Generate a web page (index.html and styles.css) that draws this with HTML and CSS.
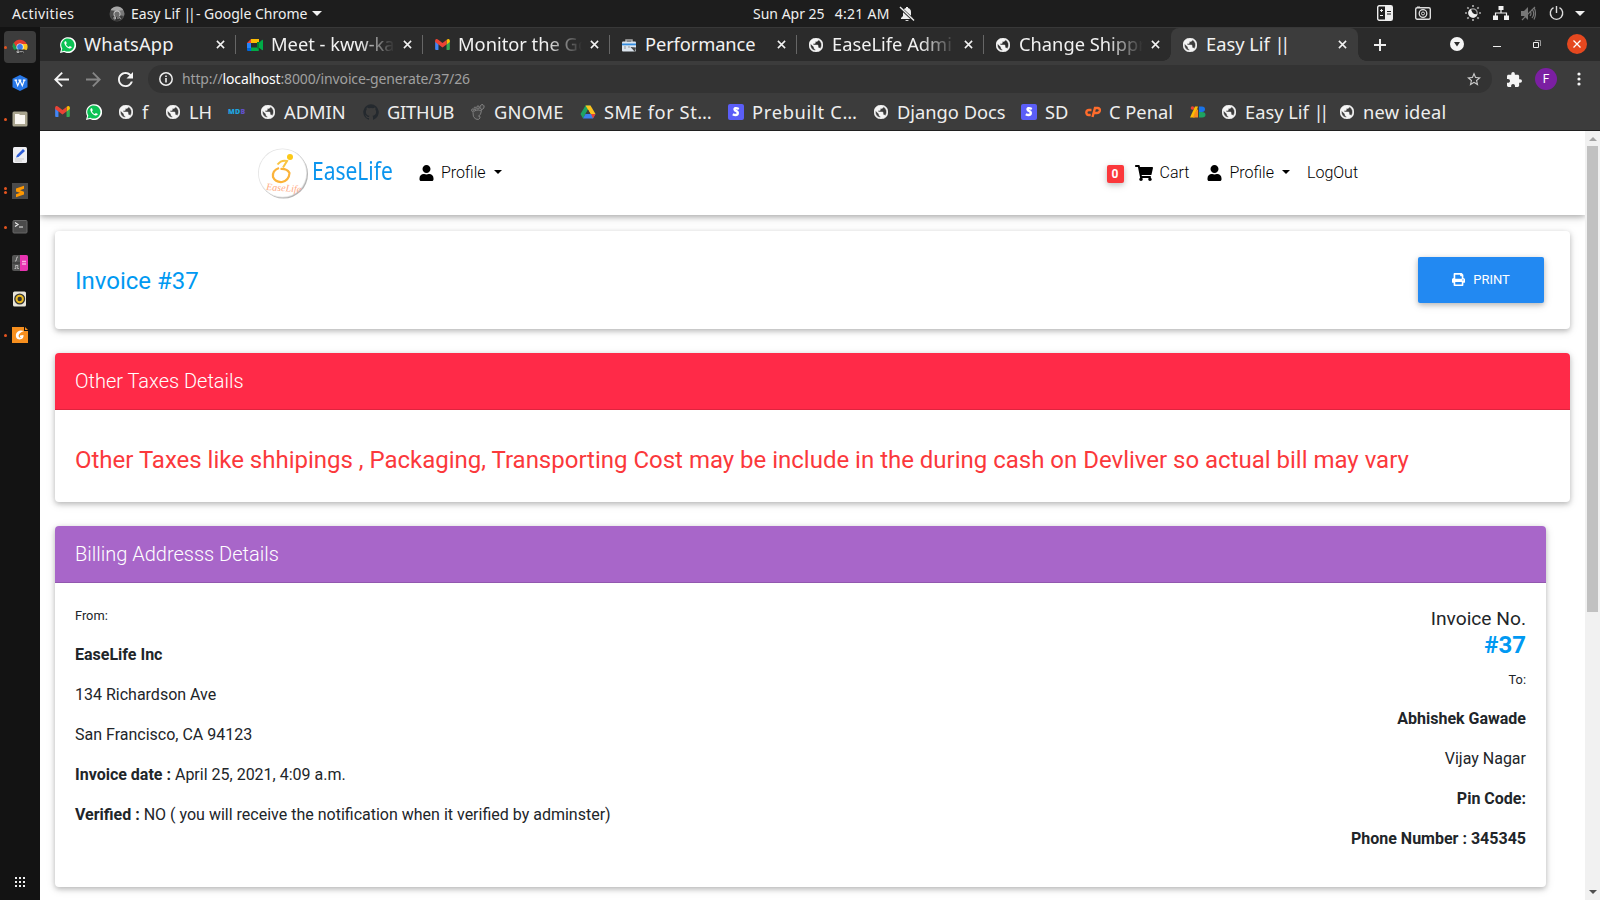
FILE: index.html
```html
<!DOCTYPE html>
<html lang="en">
<head>
<meta charset="utf-8">
<title>Easy Lif ||</title>
<link rel="stylesheet" href="styles.css">
</head>
<body>
<svg class="defs" aria-hidden="true">
  <symbol id="globe" viewBox="2 2 20 20"><path d="M12 2C6.48 2 2 6.48 2 12s4.48 10 10 10 10-4.480 10-10S17.520 2 12 2zm-1 17.930c-3.950-.490-7-3.850-7-7.930 0-.620.080-1.210.210-1.790L9 15v1c0 1.100.900 2 2 2v1.930zm6.900-2.540c-.260-.810-1-1.390-1.900-1.390h-1v-3c0-.550-.450-1-1-1H8v-2h2c.550 0 1-.450 1-1V7h2c1.100 0 2-.900 2-2v-.410c2.930 1.190 5 4.060 5 7.410 0 2.080-.800 3.970-2.100 5.390z" fill="#f5f5f5" stroke="#f5f5f5" stroke-width=".7"/></symbol>
  <symbol id="whatsapp" viewBox="0 0 16 16"><path d="M0 16l1.100-4A8 8 0 1 1 4 15z" fill="#fff"/><path d="M1.500 14.500l.8-2.900A6.600 6.600 0 1 1 4.500 13.700z" fill="#0cc254"/><path d="M5.200 4.200c-.9.500-1.100 1.500-.6 2.700.8 2 2.400 3.600 4.500 4.500 1.300.4 2.400 0 2.700-1.300l-2-1-.9 1C7.500 9.500 6.500 8.500 6 7.200l.8-.9-.8-2.100z" fill="#fff"/></symbol>
  <symbol id="gmail" viewBox="0 0 16 12"><path d="M0 2v9q0 1 1 1h2.600V5z" fill="#4285f4"/><path d="M16 2v9q0 1-1 1h-2.600V5z" fill="#34a853"/><path d="M12.400 1v5L16 3.300V1.700C16 0 14.200-.5 13 .5z" fill="#fbbc04"/><path d="M0 1.700C0 0 1.800-.5 3 .5l5 3.800 5-3.800-.6.600V6L8 9.200 3.600 6 0 3.300z" fill="#ea4335"/></symbol>
  <symbol id="close" viewBox="0 0 10 10"><path d="M1 1l8 8M9 1L1 9" stroke="#f2f2f2" stroke-width="1.700"/></symbol>
  <symbol id="stripe" viewBox="0 0 16 16"><rect width="16" height="16" rx="2" fill="#5b5ef7"/><path d="M10.800 5Q8.900 4 7.500 4.200C5.900 4.500 6.400 6.300 8 6.900c2.600 1 2.200 4-.4 4.100-1 0-1.900-.3-2.800-.8" fill="none" stroke="#fff" stroke-width="2.400"/></symbol>
  <symbol id="user" viewBox="0 0 448 512"><path d="M224 256c70.700 0 128-57.300 128-128S294.700 0 224 0 96 57.300 96 128s57.300 128 128 128zm89.600 32h-16.700c-22.200 10.200-46.900 16-72.900 16s-50.600-5.800-72.900-16h-16.700C60.200 288 0 348.200 0 422.400V464c0 26.500 21.500 48 48 48h352c26.500 0 48-21.500 48-48v-41.600c0-74.200-60.200-134.400-134.400-134.400z"/></symbol>
</svg>

<header class="topbar">
  <span class="activities">Activities</span>
  <div class="app-menu">
    <svg width="16" height="16" viewBox="0 0 16 16"><circle cx="8" cy="8" r="7.500" fill="#4b4b4b"/><path d="M1.500 4.300A7.500 7.500 0 0 1 14.600 4.500L8 5z" fill="#a7a7a7"/><path d="M8 5h6.800q1.200 3 0 5L11 9z" fill="#777"/><circle cx="8" cy="8" r="3.500" fill="#c9c9c9"/><circle cx="8" cy="8" r="2.600" fill="#6b6b6b"/><path d="M2.500 10.500h11q-5.500 9-11 0z" fill="#333"/><path d="M5 11v2h1.500v-2zM8 12h2M10.500 11l1 2" stroke="#ddd" stroke-width=".7" fill="none"/></svg>
    <span class="app-title">Easy Lif <span class="bars">||</span> - Google Chrome</span>
    <i class="arrow-down"></i>
  </div>
  <div class="clock"><span>Sun Apr 25</span><span class="time">4:21 AM</span>
    <svg width="16" height="16" viewBox="0 0 16 16" fill="#eee"><path d="M7 1h2v1q3 .8 3 4v4l2 2v1H2v-1l2-2V6q0-3.200 3-4zM6 14h4q-2 2-4 0z"/><path d="M1 1.500l14 13" stroke="#1d1d1d" stroke-width="3"/><path d="M1 1l14 13.500" stroke="#eee" stroke-width="1.400"/></svg>
  </div>
  <div class="status">
    <svg width="16" height="16" viewBox="0 0 16 16"><rect x=".7" y=".7" width="14.600" height="14.600" rx="1.500" fill="none" stroke="#eee" stroke-width="1.400"/><path d="M8 1h7v14H8z" fill="#eee"/><path d="M3 5.500h3M4.500 4v3M3 10.500h3" stroke="#eee"/><path d="M10 6.500h4M10 9h4" stroke="#1d1d1d" stroke-width="1.200"/></svg>
    <svg width="16" height="14" viewBox="0 0 16 14" fill="none" stroke="#ddd"><rect x=".7" y="1.700" width="14.600" height="11.500" rx="1.500" stroke-width="1.400"/><path d="M2 1h3"/><circle cx="8" cy="7.500" r="3.800" stroke-width="1.300"/><circle cx="8" cy="7.500" r="1.500"/></svg>
    <svg width="16" height="16" viewBox="0 0 16 16"><path d="M8 0v2M8 14v2M0 8h2M14 8h2M2.300 2.300l1.400 1.400M12.300 12.300l1.400 1.400M2.300 13.700l1.400-1.400M12.300 3.700l1.400-1.400" stroke="#aaa" stroke-width="1.700"/><circle cx="8" cy="8" r="4.200" fill="none" stroke="#999" stroke-width="1.200"/><path d="M6 3.700a4.700 4.700 0 1 0 6.500 5.500Q7 10 6 3.700z" fill="#eee"/></svg>
    <svg width="16" height="14" viewBox="0 0 16 14"><path d="M5.500 0h5v4h-5zM0 9.500h5V14H0zM11 9.500h5V14h-5z" fill="#f2f2f2"/><path d="M8 3v4M2.500 10V7h11v3" stroke="#f2f2f2" stroke-width="1.200" fill="none"/></svg>
    <svg width="15" height="15" viewBox="0 0 15 15"><path d="M0 5h3l4-4v13l-4-4H0z" fill="#777"/><path d="M9 5q2 2.500 0 5M11 3q3.500 4.500 0 9M13 1.500v0q3 6 0 12M1 14L14 1" stroke="#777" fill="none" stroke-width="1.200"/></svg>
    <svg width="15" height="15" viewBox="0 0 15 15" fill="none" stroke="#ddd" stroke-width="1.400"><path d="M7.500 0v7M4.500 1.700a6.200 6.200 0 1 0 6 0"/></svg>
    <i class="arrow-down"></i>
  </div>
</header>

<div class="desktop">
  <nav class="dock">
    <div class="dock-item current"><i class="dots one"></i><svg width="16" height="16" viewBox="0 0 16 16"><path d="M.5 8A7.500 7.500 0 0 1 15 5.500H8z" fill="#e33b2e"/><path d="M.5 7q0-2 1.200-3.500L5 9.500 6 12q-5 0-5.500-5z" fill="#1d9a50"/><path d="M8 5h7q1.300 3-.3 6H10z" fill="#fcc31e"/><circle cx="8" cy="8" r="3.600" fill="#fff"/><circle cx="8" cy="8" r="2.900" fill="#3b7de9"/><path d="M2.500 10.500h11q-5.500 10-11 0z" fill="#333"/><path d="M5 12h2v1.500H5zM8 12.700h2M10.500 12l1 1.500" stroke="#ddd" stroke-width=".7" fill="none"/></svg></div>
    <div class="dock-item"><svg width="16" height="16" viewBox="0 0 16 16"><path d="M8 0l7.500 3.700v8.600L8 16 .5 12.300V3.700z" fill="#2878e8"/><path d="M2.500 5.200H5M11 5.200h2.500M3.700 5.200l2 5.500L8 5.500l2.300 5.200 2-5.500M6.300 5.200h3" fill="none" stroke="#fff" stroke-width="1.200"/></svg></div>
    <div class="dock-item"><i class="dots one"></i><svg width="16" height="16" viewBox="0 0 16 16"><rect x=".5" y=".5" width="15" height="15" rx="1.500" fill="#aaa58f"/><path d="M3 3h4l1 1h5v9H3z" fill="#faf7f2"/></svg></div>
    <div class="dock-item"><svg width="16" height="16" viewBox="0 0 16 16"><rect x="1" width="14" height="16" rx="1.500" fill="#eeeef2"/><path d="M3 12h9M3 14h7" stroke="#ccc"/><path d="M4 10.500l1-2.500 6-6 2 2-6.500 6z" fill="#2e5ed8"/></svg></div>
    <div class="dock-item"><i class="dots two"></i><svg width="16" height="16" viewBox="0 0 16 16"><rect width="16" height="16" fill="#4b4b4b"/><path d="M4 5.500l8-2.700v3L8 7.200l4 1.500v2.800l-8 2.700v-3l4-1.400-4-1.400z" fill="#ff9800"/></svg></div>
    <div class="dock-item"><i class="dots one"></i><svg width="16" height="14" viewBox="0 0 16 14"><rect x="1" y=".5" width="14" height="12.500" rx="1" fill="#4b4b4b" stroke="#666"/><path d="M3 2.500l3 2-3 2M7 7h4" fill="none" stroke="#eee" stroke-width="1.200"/></svg></div>
    <div class="dock-item"><svg width="16" height="16" viewBox="0 0 16 16"><rect width="16" height="16" rx="2" fill="#555"/><path d="M8 0h6q2 0 2 2v12q0 2-2 2H8z" fill="#e733b0"/><path d="M.5 8H8" stroke="#333"/><path d="M10 6.500h4M10 9h4" stroke="#f8b0df" stroke-width="1.300"/><path d="M3 6h1l1-4h1M2.500 13.500H4l-.5-3h2.500l-.5 3H7" stroke="#ccc" stroke-width=".8" fill="none"/></svg></div>
    <div class="dock-item"><svg width="16" height="16" viewBox="0 0 16 16"><rect x="1" y=".5" width="13" height="15" rx="1.500" fill="#e8e5da"/><circle cx="7.700" cy="8" r="5.500" fill="#333"/><circle cx="7.700" cy="8" r="3.200" fill="none" stroke="#e8b923" stroke-width="2"/></svg></div>
    <div class="dock-item"><i class="dots one"></i><svg width="16" height="16" viewBox="0 0 16 16"><path d="M0 0h12v4h4v12H0z" fill="#f78f1e"/><path d="M13 0l3 3h-3z" fill="#f78f1e"/><path d="M12 4Q6 2 4 7q-1 5 3.500 5.500Q12 12 11.500 8L8 8.500v1.500h1.500Q8 11 6.800 10 5.500 6.500 12 4z" fill="#fff"/></svg></div>
    <svg class="apps" width="10" height="10" viewBox="0 0 10 10" fill="#eee"><path d="M0 0h2v2H0zM4 0h2v2H4zM8 0h2v2H8zM0 4h2v2H0zM4 4h2v2H4zM8 4h2v2H8zM0 8h2v2H0zM4 8h2v2H4zM8 8h2v2H8z"/></svg>
  </nav>

  <section class="browser">
    <div class="tabstrip">
      <div class="tab"><svg class="fav"><use href="#whatsapp"/></svg><span class="tab-label wa">WhatsApp</span><svg class="x"><use href="#close"/></svg></div>
      <div class="tab"><svg class="fav" viewBox="0 0 16 16"><path d="M0 6l4-4v4z" fill="#ea4335"/><path d="M4 2h8v4H4z" fill="#fbbc04"/><path d="M0 6h4v5H0z" fill="#2684fc"/><path d="M0 11h4v3H1q-1 0-1-1z" fill="#0066da"/><path d="M4 10.500h8V13q0 1-1 1H4z" fill="#00ac47"/><path d="M11 6.500l4-3.500q1-.5 1 .5v9q0 1-1 .5l-4-3z" fill="#00ac47"/><path d="M10 5h2v8l-2-2z" fill="#00832d"/></svg><span class="tab-label fade">Meet - kww-ka</span><svg class="x"><use href="#close"/></svg></div>
      <div class="tab"><svg class="fav gm"><use href="#gmail"/></svg><span class="tab-label fade">Monitor the Go</span><svg class="x"><use href="#close"/></svg></div>
      <div class="tab"><svg class="fav" viewBox="0 0 16 16"><path d="M5 5V3h6v2" fill="none" stroke="#aaa" stroke-width="1.500"/><rect x="1" y="4.500" width="14" height="10" rx="1" fill="#dce5ee"/><path d="M1 6.500h14v1.800H1z" fill="#348cdf"/><path d="M4 9v3M8 9v2" stroke="#999"/><path d="M9.500 10l4.500 5 1-4.500z" fill="#444"/></svg><span class="tab-label perf">Performance</span><svg class="x"><use href="#close"/></svg></div>
      <div class="tab"><svg class="fav gl"><use href="#globe"/></svg><span class="tab-label fade">EaseLife Admi</span><svg class="x"><use href="#close"/></svg></div>
      <div class="tab last"><svg class="fav gl"><use href="#globe"/></svg><span class="tab-label fade">Change Shippr</span><svg class="x"><use href="#close"/></svg></div>
      <div class="tab active"><svg class="fav gl"><use href="#globe"/></svg><span class="tab-label">Easy Lif <span class="bars">||</span></span><svg class="x"><use href="#close"/></svg></div>
      <svg class="newtab" width="12" height="12" viewBox="0 0 12 12"><path d="M6 0v12M0 6h12" stroke="#eee" stroke-width="2"/></svg>
      <div class="controls">
        <svg width="14" height="14" viewBox="0 0 14 14"><circle cx="7" cy="7" r="7" fill="#f5f5f5"/><path d="M4 5h6L7 9.500z" fill="#2b2b2b"/></svg>
        <svg width="8" height="6" viewBox="0 0 8 6"><path d="M0 5.500h8" stroke="#eee"/></svg>
        <svg width="8" height="8" viewBox="0 0 8 8" fill="none"><path d="M.5 2.500h5v5h-5z" stroke="#eee"/><path d="M2 .5h5.500V6" stroke="#999"/></svg>
        <svg width="20" height="20" viewBox="0 0 20 20"><circle cx="10" cy="10" r="10" fill="#e5481f"/><path d="M6.500 6.500l7 7M13.500 6.500l-7 7" stroke="#fff" stroke-width="1.300"/></svg>
      </div>
    </div>

    <div class="toolbar">
      <svg class="nav-ic" viewBox="4 4 16 16"><path d="M20 11H7.830l5.590-5.590L12 4l-8 8 8 8 1.410-1.410L7.830 13H20v-2z" fill="#f5f5f5"/></svg>
      <svg class="nav-ic" viewBox="4 4 16 16"><path d="M12 4l-1.410 1.410L16.170 11H4v2h12.170l-5.580 5.590L12 20l8-8z" fill="#868686"/></svg>
      <svg class="nav-ic" viewBox="4 4 16 16"><path d="M17.650 6.350C16.200 4.900 14.210 4 12 4c-4.420 0-7.990 3.580-7.990 8s3.570 8 7.990 8c3.730 0 6.840-2.550 7.730-6h-2.080c-.82 2.330-3.040 4-5.650 4-3.310 0-6-2.690-6-6s2.690-6 6-6c1.660 0 3.140.69 4.220 1.780L13 11h7V4l-2.350 2.350z" fill="#f5f5f5"/></svg>
      <div class="omnibox">
        <svg width="14" height="14" viewBox="0 0 14 14"><circle cx="7" cy="7" r="6.200" fill="none" stroke="#eee" stroke-width="1.500"/><path d="M6.200 6h1.600v4.500H6.200zM6.200 3.500h1.600V5H6.200z" fill="#eee"/></svg>
        <span class="url">http://<b>localhost</b>:8000/invoice-generate/37/26</span>
        <svg class="star" width="14" height="14" viewBox="2 2 20 19"><path d="M22 9.240l-7.190-.62L12 2 9.190 8.630 2 9.240l5.460 4.730L5.820 21 12 17.270 18.180 21l-1.630-7.030L22 9.240zM12 15.400l-3.760 2.270 1-4.280-3.320-2.880 4.380-.38L12 6.100l1.710 4.040 4.380.38-3.320 2.880 1 4.280L12 15.400z" fill="#ccc"/></svg>
      </div>
      <svg class="puzzle" width="15" height="15" viewBox="2 1 21 21"><path d="M20.500 11H19V7c0-1.100-.9-2-2-2h-4V3.500a2.500 2.500 0 0 0-5 0V5H4c-1.100 0-1.990.9-1.990 2v3.800H3.500c1.490 0 2.700 1.210 2.700 2.700s-1.210 2.700-2.700 2.700H2V20c0 1.100.9 2 2 2h3.800v-1.500c0-1.490 1.210-2.700 2.700-2.700s2.700 1.210 2.700 2.700V22H17c1.100 0 2-.9 2-2v-4h1.500a2.500 2.500 0 0 0 0-5z" fill="#f5f5f5"/></svg>
      <span class="avatar">F</span>
      <svg class="more" width="4" height="14" viewBox="0 0 4 14" fill="#f5f5f5"><circle cx="2" cy="2" r="1.600"/><circle cx="2" cy="7" r="1.600"/><circle cx="2" cy="12" r="1.600"/></svg>
    </div>

    <div class="bookmarks">
      <span><svg class="fav gm"><use href="#gmail"/></svg></span>
      <span><svg class="fav"><use href="#whatsapp"/></svg></span>
      <span><svg class="fav gl"><use href="#globe"/></svg>f</span>
      <span><svg class="fav gl"><use href="#globe"/></svg>LH</span>
      <span class="mdb">MD<em>B</em></span>
      <span class="t-admin"><svg class="fav gl"><use href="#globe"/></svg>ADMIN</span>
      <span class="t-github"><svg class="fav" viewBox="0 0 16 16"><path d="M8 .2a8 8 0 0 0-2.500 15.500c.4 0 .5-.2.500-.4V14c-2.200.5-2.700-1-2.700-1-.4-.9-.9-1.200-.9-1.200-.7-.5.100-.5.100-.5.800.1 1.200.8 1.200.8.700 1.200 1.900.9 2.300.7.100-.5.300-.9.500-1.100-1.800-.2-3.600-.9-3.600-4 0-.9.300-1.600.8-2.100-.1-.3-.4-1 .1-2.200 0 0 .7-.2 2.200.8a7.500 7.500 0 0 1 4 0c1.500-1 2.200-.8 2.200-.8.500 1.200.2 1.900.1 2.200.5.500.8 1.200.8 2.100 0 3.100-1.900 3.800-3.700 4 .3.300.6.800.6 1.500v2.200c0 .2.100.4.500.3A8 8 0 0 0 8 .2z" fill="#24292e"/></svg>GITHUB</span>
      <span class="t-gnome"><svg class="fav" viewBox="0 0 16 16" fill="#444" stroke="#8d8d8d" stroke-width=".8"><path d="M11.500 6.500Q5 5 3 8.500 2.500 13 5.500 15q3.500 1.500 4.500-1 .5-2-1.500-2 2.500-.5 3-5.500z"/><ellipse cx="12" cy="3" rx="2" ry="2.500" transform="rotate(25 12 3)"/><ellipse cx="8" cy="3.500" rx="1.200" ry="1.700"/><ellipse cx="5" cy="4.500" rx="1" ry="1.500"/><ellipse cx="2.500" cy="6.200" rx=".9" ry="1.300"/></svg>GNOME</span>
      <span class="t-sme"><svg class="fav" viewBox="0 0 16 16"><path d="M5.500 1.500h5L5.500 10 3 14.500.5 10z" fill="#1ea362"/><path d="M5.500 1.500h5l5 8.500h-5z" fill="#fcc31e"/><path d="M5.500 10h10L13 14.500H3z" fill="#3b80ee"/><path d="M11 10h4.500L13 14.500z" fill="#ea4335"/><path d="M8 5.500l2.500 4.500h-5z" fill="#3c3c3c"/></svg>SME for St…</span>
      <span class="t-pre"><svg class="fav"><use href="#stripe"/></svg>Prebuilt C…</span>
      <span class="t-django"><svg class="fav gl"><use href="#globe"/></svg>Django Docs</span>
      <span><svg class="fav"><use href="#stripe"/></svg>SD</span>
      <span class="t-penal"><svg class="fav" viewBox="0 0 16 16" fill="none" stroke="#ff6c2c" stroke-width="2.400"><path d="M6.500 6H4Q1.500 6 1.300 8.500 1.500 11 3.500 11h2.200M7.500 13l2.500-9H12.800q2.500.5 2 2.800-.7 2.200-3 2.200H9.500"/></svg>C Penal</span>
      <span><svg class="fav" viewBox="0 0 16 16"><circle cx="2.500" cy="4" r="1.800" fill="#ea4335"/><path d="M5 2.500h3L4.500 13.500H0z" fill="#fbbc04"/><path d="M5 8l3-3v8.500H3z" fill="#f68b1e"/><path d="M9 2.500h3q3 0 3 2.700T12 8H9z" fill="#1a73e8"/><path d="M9 8h3q3.500 0 3.500 2.800T12 13.500H9z" fill="#1ea362"/></svg></span>
      <span class="t-easy"><svg class="fav gl"><use href="#globe"/></svg><span>Easy Lif <span class="bars">||</span></span></span>
      <span class="t-new"><svg class="fav gl"><use href="#globe"/></svg>new ideal</span>
    </div>

    <div class="viewport">
      <div class="page">
        <nav class="navbar">
          <a class="brand">
            <svg width="51" height="52" viewBox="0 0 51 52"><circle cx="25.500" cy="26" r="24.500" fill="#b5b5b5"/><circle cx="24.500" cy="25" r="24.500" fill="#e4e4e4"/><circle cx="24.500" cy="25" r="23.700" fill="#fff"/><circle cx="32" cy="9" r="3" fill="#fcc917"/><path d="M19.500 16.500q4-5 9.500-3.500l-4 6.500" fill="none" stroke="#f9c440" stroke-width="2"/><path d="M21 20Q14 22.500 15 29q2.500 5.500 9 5 7-1.500 7.500-9-2.500-4.500-9-4" fill="none" stroke="#fbb33a" stroke-width="2.200"/><text x="8" y="42" class="logo-text" transform="rotate(4 8 42)">EaseLife</text></svg>
            <span class="brand-name">EaseLife</span>
          </a>
          <a class="nav-link first"><svg class="user"><use href="#user"/></svg>Profile<i class="caret"></i></a>
          <div class="nav-right">
            <span class="badge">0</span>
            <a class="nav-link"><svg class="cart" viewBox="0 0 576 512"><path d="M528.120 301.319l47.273-208C578.806 78.301 567.391 64 551.990 64H159.208l-9.166-44.810C147.758 8.021 137.930 0 126.529 0H24C10.745 0 0 10.745 0 24v16c0 13.255 10.745 24 24 24h69.883l70.248 343.435C147.325 417.100 136 435.222 136 456c0 30.928 25.072 56 56 56s56-25.072 56-56c0-15.674-6.447-29.835-16.824-40h209.647C430.447 426.165 424 440.326 424 456c0 30.928 25.072 56 56 56s56-25.072 56-56c0-22.172-12.888-41.332-31.579-50.405l5.517-24.276c3.413-15.018-8.002-29.319-23.403-29.319H218.117l-6.545-32h293.145c11.206 0 20.920-7.754 23.403-18.681z"/></svg>Cart</a>
            <a class="nav-link second"><svg class="user"><use href="#user"/></svg>Profile<i class="caret"></i></a>
            <a class="nav-link logout">LogOut</a>
          </div>
        </nav>

        <main class="content">
          <section class="card title-card">
            <h4 class="invoice-title">Invoice #37</h4>
            <button class="print"><svg width="13" height="13" viewBox="0 0 512 512" fill="#fff"><path d="M448 192V77.250c0-8.490-3.370-16.620-9.370-22.630L393.370 9.370c-6-6-14.140-9.370-22.630-9.370H96C78.330 0 64 14.330 64 32v160c-35.350 0-64 28.650-64 64v112c0 8.840 7.160 16 16 16h48v96c0 17.670 14.330 32 32 32h320c17.670 0 32-14.330 32-32v-96h48c8.840 0 16-7.160 16-16V256c0-35.350-28.650-64-64-64zm-64 256H128v-96h256v96zm0-224H128V64h192v48c0 8.840 7.160 16 16 16h48v96zm48 72c-13.250 0-24-10.750-24-24 0-13.260 10.750-24 24-24s24 10.740 24 24c0 13.250-10.750 24-24 24z"/></svg>PRINT</button>
          </section>

          <section class="card">
            <div class="card-header red">Other Taxes Details</div>
            <div class="card-body taxes">Other Taxes like shhipings , Packaging, Transporting Cost may be include in the during cash on Devliver so actual bill may vary</div>
          </section>

          <section class="card billing">
            <div class="card-header purple">Billing Addresss Details</div>
            <div class="card-body columns">
              <div>
                <p><small>From:</small></p>
                <p><strong>EaseLife Inc</strong></p>
                <p>134 Richardson Ave</p>
                <p>San Francisco, CA 94123</p>
                <p><strong>Invoice date :</strong> April 25, 2021, 4:09 a.m.</p>
                <p><strong>Verified :</strong> NO ( you will receive the notification when it verified by adminster)</p>
              </div>
              <div class="to">
                <h4 class="invoice-no"><span>Invoice No.</span><strong>#37</strong></h4>
                <p><small>To:</small></p>
                <p><strong>Abhishek Gawade</strong></p>
                <p>Vijay Nagar</p>
                <p><strong>Pin Code:</strong></p>
                <p><strong>Phone Number : 345345</strong></p>
              </div>
            </div>
          </section>
        </main>
      </div>
      <div class="scrollbar"><i class="sb-up"></i><div class="thumb"></div><i class="sb-down"></i></div>
    </div>
  </section>
</div>
</body>
</html>
```
FILE: styles.css
```css
* { box-sizing: border-box; }
body {
  margin: 0;
  width: 1600px;
  height: 900px;
  overflow: hidden;
  display: flex;
  flex-direction: column;
  font-family: "Noto Sans", sans-serif;
  background: #fff;
}
svg { display: block; flex: none; }
.defs { position: absolute; width: 0; height: 0; }
.bars { letter-spacing: -.24em; }

/* system bar */
.topbar {
  height: 27px;
  flex: none;
  background: #1d1d1d;
  color: #f0f0f0;
  font-size: 14px;
  line-height: 27px;
  display: grid;
  grid-template-columns: 97px 644px 624px 1fr;
  padding-left: 12px;
  white-space: pre;
}
.activities { letter-spacing: .4px; }
.app-menu, .clock { display: flex; align-items: center; height: 27px; }
.app-title { margin-left: 6px; letter-spacing: 0; width: 181px; }
.arrow-down {
  border: 5px solid transparent;
  border-top-color: #f0f0f0;
  border-bottom: 0;
  align-self: center;
}
.clock { letter-spacing: 0; }
.time { margin-left: 10px; letter-spacing: .3px; }
.clock svg { margin-left: 9px; }
.status {
  height: 26px;
  display: grid;
  grid-template-columns: 38px 50px 28px 28px 28px 26px 10px;
  align-items: center;
}

.desktop { flex: 1; display: flex; min-height: 0; }

/* dock */
.dock {
  width: 40px;
  flex: none;
  background: #131313;
  padding-top: 4px;
  display: flex;
  flex-direction: column;
  align-items: center;
  gap: 4px;
}
.dock-item {
  width: 32px;
  height: 32px;
  border-radius: 4px;
  display: grid;
  place-items: center;
  position: relative;
}
.dock-item.current { background: #3c3c3c; }
.dots {
  position: absolute;
  left: 0;
  top: 14.500px;
  width: 3px;
  height: 3px;
  border-radius: 50%;
  background: #e5541f;
}
.dots.two { top: 12px; box-shadow: 0 4px #e5541f; }
.apps { margin-top: auto; margin-bottom: 13px; }

/* browser chrome */
.browser { flex: 1; display: flex; flex-direction: column; min-width: 0; }
.tabstrip {
  height: 34px;
  background: #2b2b2b;
  border-top: 1px solid #383838;
  display: flex;
  align-items: center;
  padding-left: 8.500px;
  color: #f2f2f2;
  font-size: 18.300px;
}
.tab {
  width: 187px;
  height: 33px;
  display: flex;
  align-items: center;
  padding-left: 11.500px;
  position: relative;
}
.tab:not(.last):not(.active)::after {
  content: "";
  position: absolute;
  right: 0;
  top: 7px;
  width: 1px;
  height: 19px;
  background: #666;
}
.tab.active { background: #3c3c3c; border-radius: 8px 8px 0 0; }
.tab.active::before, .tab.active::after {
  content: "";
  position: absolute;
  bottom: 0;
  width: 8px;
  height: 8px;
}
.tab.active::before { left: -8px; background: radial-gradient(circle at 0 0, transparent 7.500px, #3c3c3c 8px); }
.tab.active::after { right: -8px; background: radial-gradient(circle at 100% 0, transparent 7.500px, #3c3c3c 8px); }
.fav { width: 16px; height: 16px; }
.fav.gl { width: 14px; height: 14px; margin: 0 1px; }
.fav.gm { width: 15px; height: 11px; margin: 0 .5px; }
.tab-label {
  margin: -2px 0 0 8px;
  width: 124px;
  white-space: nowrap;
  line-height: 30px;
}
.wa { letter-spacing: .2px; }
.perf { letter-spacing: -.1px; }
.fade { mask-image: linear-gradient(90deg, #000 88px, transparent 124px); }
.x { width: 9px; height: 9px; margin-left: 7.500px; margin-top: -1px; }
.newtab { margin-left: 16.500px; }
.controls {
  margin-left: auto;
  margin-right: 3px;
  margin-top: -1px;
  display: grid;
  grid-template-columns: repeat(4, 40px);
  place-items: center;
}
.toolbar {
  height: 32px;
  background: #3c3c3c;
  padding: 4px 0 0 14px;
  display: flex;
  align-items: center;
}
.nav-ic { width: 15px; height: 15px; margin-right: 17px; }
.omnibox {
  width: 1344px;
  height: 28px;
  margin-left: -2px;
  border-radius: 14px;
  background: #333;
  display: flex;
  align-items: center;
  padding: 0 11px;
}
.url { margin: -2px 0 0 9px; color: #a0a0a0; font-size: 14px; letter-spacing: -.14px; }
.url b { font-weight: 400; color: #fff; }
.star { margin-left: auto; }
.puzzle { margin-left: 15px; }
.avatar {
  width: 22px;
  height: 22px;
  margin-left: 13px;
  border-radius: 50%;
  background: #7b1fa2;
  color: #fff;
  font: 12px/22px Roboto, sans-serif;
  text-align: center;
}
.more { margin-left: 19.500px; }
.bookmarks {
  height: 38px;
  background: #3c3c3c;
  border-bottom: 1px solid #202020;
  display: grid;
  grid-template-columns: 32px 32px 47px 63px 32px 103px 107px 110px 148px 145px 148px 64px 105px 31px 118px 120px;
  padding-left: 14px;
  color: #eee;
  font-size: 18.300px;
  white-space: nowrap;
}
.bookmarks > span { display: flex; align-items: center; gap: 8px; height: 37px; }
.bookmarks > .mdb { gap: 0; font: 800 7px "Open Sans", sans-serif; color: #1ea5e0; letter-spacing: .3px; }
.mdb em { font-style: normal; color: #6050c8; }
.t-github { letter-spacing: -.2px; }
.t-gnome { letter-spacing: .3px; }
.t-sme { letter-spacing: .55px; }
.t-pre { letter-spacing: .7px; }
.t-new { letter-spacing: .2px; }

/* web page */
.viewport { flex: 1; display: flex; min-height: 0; }
.page {
  flex: 1;
  overflow: hidden;
  font: 16px/24px Roboto, sans-serif;
  color: #212529;
}
.navbar {
  height: 84px;
  display: flex;
  align-items: center;
  padding-left: 218px;
  font-weight: 300;
  color: #000;
  box-shadow: 0 2px 5px rgba(0,0,0,.22), 0 2px 10px rgba(0,0,0,.15);
}
.brand { display: flex; align-items: center; margin-top: 2px; }
.logo-text { font: italic 10px "Liberation Serif", serif; fill: #ffa982; }
.brand-name {
  font: 25px/30px "Noto Sans", sans-serif;
  color: #0b95ee;
  width: 83px;
  margin: -8px 0 0 3px;
  transform: scaleX(.840);
  transform-origin: 0 50%;
}
.nav-link { display: flex; align-items: center; }
.nav-link.first { margin-left: 24px; }
.user { width: 15px; height: 16px; margin-right: 7px; }
.cart { width: 18px; height: 16px; margin-right: 7px; }
.caret { border: 4.800px solid transparent; border-top-color: #000; border-bottom: 0; margin: -2px 0 0 8px; }
.nav-right { margin-left: 605px; display: flex; align-items: center; }
.badge {
  width: 17px;
  height: 18px;
  margin: 1px 11px 0 0;
  border-radius: 2px;
  background: #fb383b;
  color: #fff;
  font: 700 12px/18px Roboto, sans-serif;
  text-align: center;
  box-shadow: 0 2px 5px rgba(0,0,0,.16), 0 2px 10px rgba(0,0,0,.12);
}
.second { margin-left: 18px; }
.logout { margin-left: 17px; }
.content { padding: 16px 15px 0; }
.card {
  border-radius: 4px;
  background: #fff;
  margin-bottom: 24px;
  box-shadow: 0 2px 5px rgba(0,0,0,.2), 0 2px 10px rgba(0,0,0,.13);
}
.title-card {
  height: 98px;
  display: flex;
  align-items: center;
  justify-content: space-between;
  padding: 0 26px 0 20px;
}
.invoice-title { margin: 1px 0 0; font-size: 24px; font-weight: 400; color: #0099f2; }
.print {
  width: 126px;
  height: 46px;
  border: 0;
  border-radius: 2px;
  background: #2289f2;
  color: #fff;
  display: flex;
  align-items: center;
  justify-content: center;
  gap: 8px;
  padding: 0 0 2px;
  font: 13px Roboto, sans-serif;
  box-shadow: 0 2px 5px rgba(0,0,0,.2), 0 2px 10px rgba(0,0,0,.13);
}
.card-header {
  height: 57px;
  padding: 12px 20px;
  border-radius: 4px 4px 0 0;
  border-bottom: 1px solid rgba(0,0,0,.13);
  font-size: 20px;
  font-weight: 300;
  line-height: 32px;
  color: #fff;
}
.red { background: #ff2a48; }
.purple { background: #a866c9; }
.card-body { padding: 20px; }
.taxes { height: 92px; font-size: 24px; line-height: 29px; letter-spacing: -.008px; padding-top: 36px; color: #fb383b; white-space: nowrap; }
.billing { width: 1491px; }
.columns { height: 304px; display: flex; justify-content: space-between; }
p { margin: 0 0 16px; }
small { font-size: 12.800px; line-height: 1; }
strong { font-weight: 700; }
.to { text-align: right; }
.invoice-no { margin: 4px 0 7px; font-weight: 400; }
.invoice-no span { display: block; font-size: 19.200px; line-height: 24px; }
.invoice-no strong { display: block; font-size: 24px; line-height: 29px; color: #0099f2; }

.scrollbar {
  width: 15px;
  background: #f1f1f1;
  display: flex;
  flex-direction: column;
  align-items: center;
}
.sb-up, .sb-down { border: 4px solid transparent; }
.sb-up { border-bottom-color: #a3a3a3; border-top: 0; margin: 6px 0 5px; }
.thumb { width: 11px; height: 466px; background: #c1c1c1; }
.sb-down { border-top-color: #505050; border-bottom: 0; margin: auto 0 6px; }
```
